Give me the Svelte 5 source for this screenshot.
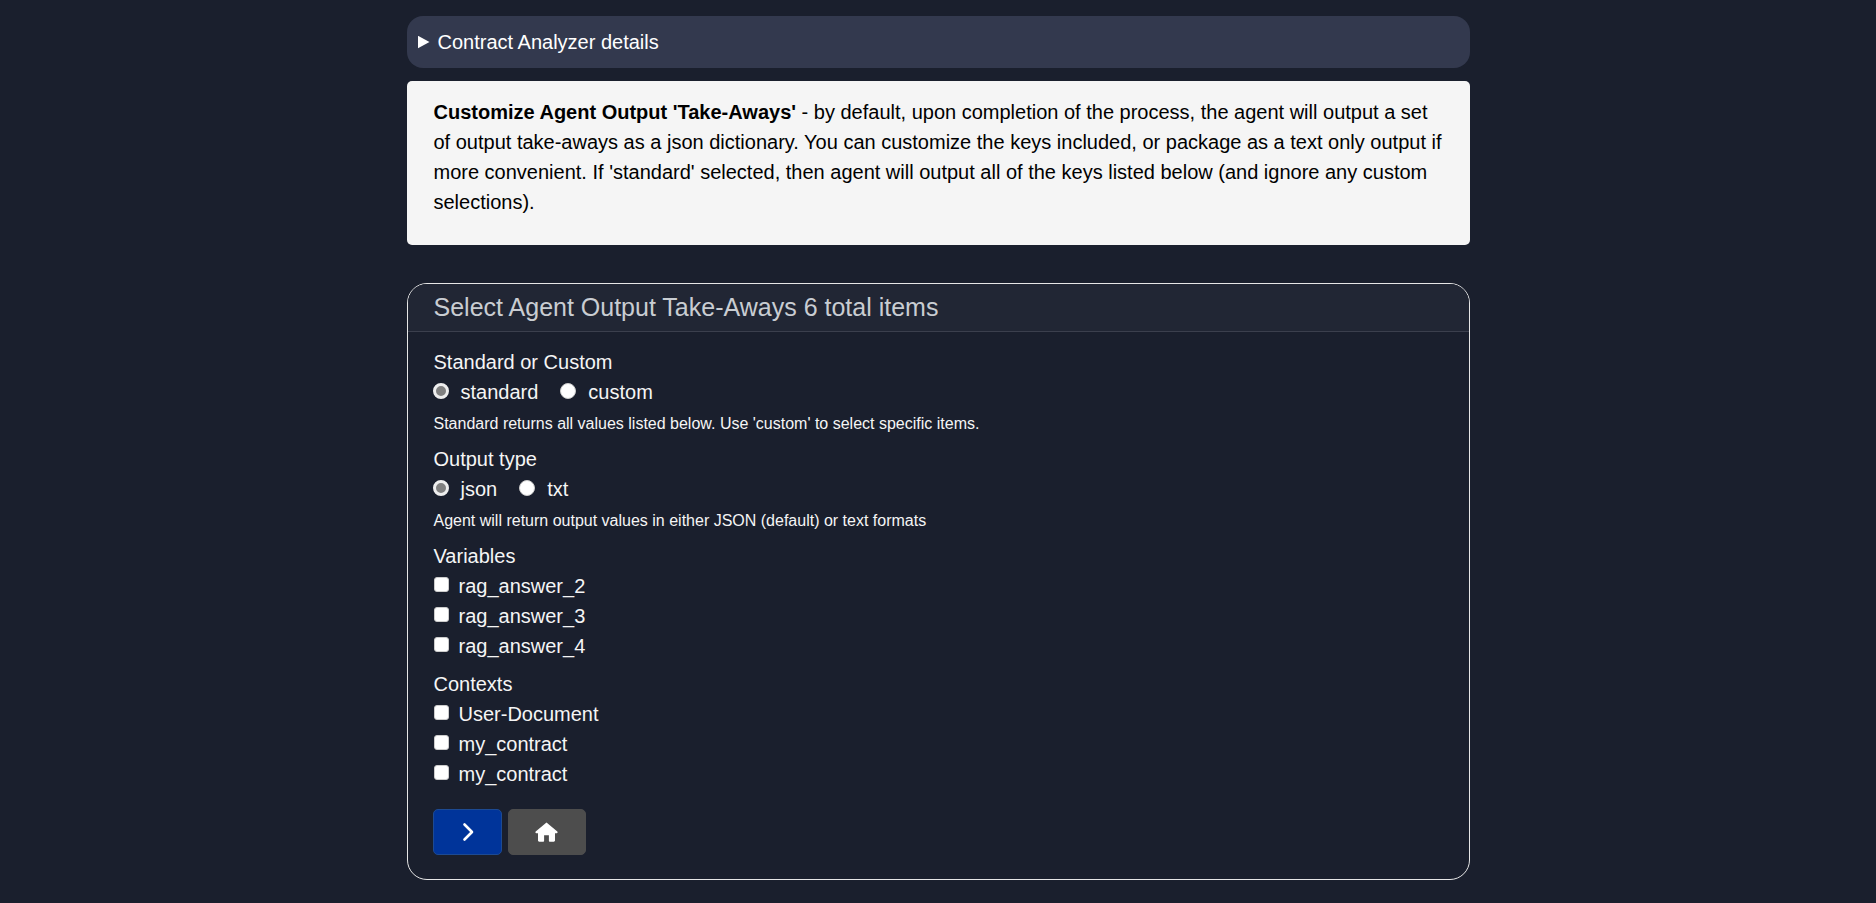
<script>
  const groups = [
    { name: 'mode', label: 'Standard or Custom', options: ['standard', 'custom'], help: "Standard returns all values listed below. Use 'custom' to select specific items." },
    { name: 'format', label: 'Output type', options: ['json', 'txt'], help: 'Agent will return output values in either JSON (default) or text formats' }
  ];
  const checks = [
    { label: 'Variables', items: ['rag_answer_2', 'rag_answer_3', 'rag_answer_4'] },
    { label: 'Contexts', items: ['User-Document', 'my_contract', 'my_contract'] }
  ];
</script>

<main class="page">
  <details class="summary-box">
    <summary>Contract Analyzer details</summary>
  </details>

  <section class="info">
    <p><strong>Customize Agent Output 'Take-Aways'</strong> - by default, upon completion of the process, the agent will output a set of output take-aways as a json dictionary. You can customize the keys included, or package as a text only output if more convenient. If 'standard' selected, then agent will output all of the keys listed below (and ignore any custom selections).</p>
  </section>

  <section class="card">
    <header class="card-header">Select Agent Output Take-Aways 6 total items</header>
    <form class="card-body" onsubmit={(e) => e.preventDefault()}>
      {#each groups as g}
        <div class="group">
          <div class="label">{g.label}</div>
          <div class="radios">
            {#each g.options as o, i}
              <label class="radio"><input type="radio" name={g.name} checked={i === 0} />{o}</label>
            {/each}
          </div>
          <div class="help">{g.help}</div>
        </div>
      {/each}

      {#each checks as c}
        <div class="checks">
          <div class="label">{c.label}</div>
          {#each c.items as item}
            <label class="check"><input type="checkbox" />{item}</label>
          {/each}
        </div>
      {/each}

      <div class="buttons">
        <button class="btn next" type="submit" aria-label="Next">
          <svg width="16" height="20" viewBox="0 0 16 20" fill="none"><path d="M4.500 2.500 12 10l-7.500 7.500" stroke="#fff" stroke-width="2.600" stroke-linecap="round" stroke-linejoin="round" /></svg>
        </button>
        <button class="btn home" type="button" aria-label="Home">
          <svg width="23" height="20" viewBox="0 0 23 20"><path fill="#fff" d="M11.500.4 22.300 9.600c.6.500.3 1.600-.6 1.600H20v7.300c0 .7-.6 1.200-1.200 1.200h-3.900c-.6 0-1-.5-1-1v-5.500H9.100v5.500c0 .5-.4 1-1 1H4.200c-.6 0-1.200-.5-1.200-1.200v-7.300H1.300c-.9 0-1.200-1.100-.6-1.600z" /></svg>
        </button>
      </div>
    </form>
  </section>
</main>

<style>
  :global(body) {
    background: #1a1f2d;
    font-family: "Liberation Sans", Arial, sans-serif;
    font-size: 20px;
    line-height: 1.5;
    color: #f5f5f5;
  }
  .page {
    width: 1063px;
    margin: 0 auto;
    padding: 16px 0 23px;
  }
  .summary-box {
    background: #33394e;
    border-radius: 16px;
    height: 52px;
    margin-bottom: 13px;
  }
  summary {
    display: flex;
    align-items: center;
    height: 52px;
    padding-left: 11px;
    list-style: none;
    cursor: pointer;
    color: #fff;
  }
  summary::before {
    content: "";
    width: 12px;
    height: 13px;
    margin-right: 8px;
    background: #fff;
    clip-path: polygon(0 0, 100% 50%, 0 100%);
  }
  .info {
    background: #f5f5f5;
    color: #000;
    border-radius: 5px;
    padding: 16px 27px 28px;
    margin-bottom: 38px;
  }
  .info p {
    margin: 0;
  }
  .card {
    border: 1px solid #e6e6e6;
    border-radius: 20px;
    overflow: hidden;
  }
  .card-header {
    background: #212634;
    color: #c9cdd2;
    font-size: 25px;
    line-height: 29px;
    padding: 9px 26px;
    border-bottom: 1px solid #3b3f4d;
  }
  .card-body {
    padding: 15px 26px 24px;
    display: flex;
    flex-direction: column;
  }
  .group {
    margin-bottom: 10px;
  }
  .radios {
    display: flex;
    gap: 22px;
  }
  .radio,
  .check {
    display: flex;
    align-items: center;
    height: 30px;
  }
  .radio input,
  .check input {
    appearance: none;
    margin: 0 0 3px;
    background: #fff;
    flex: none;
  }
  .radio input {
    width: 16px;
    height: 16px;
    border-radius: 50%;
    margin-left: -1px;
    margin-right: 12px;
    border: 1px solid #ccc;
  }
  .radio + .radio input {
    margin-left: 0;
  }
  .radio input:checked {
    background: #808080;
    border: 3px solid #eee;
  }
  .check input {
    width: 15px;
    height: 15px;
    margin-right: 10px;
    border-radius: 3px;
    border: 1px solid #ccc;
  }
  .help {
    font-size: 16px;
    line-height: 21px;
    margin-top: 6px;
  }
  .checks {
    margin-bottom: 8px;
  }
  .buttons {
    display: flex;
    gap: 6px;
    margin: 12px 0 0 -1px;
  }
  .btn {
    height: 46px;
    border-radius: 5px;
    display: flex;
    align-items: center;
    justify-content: center;
    padding: 0;
    cursor: pointer;
  }
  .next {
    width: 69px;
    background: #00349a;
    border: 1px solid #1d4a92;
  }
  .next svg {
    margin-left: 2px;
  }
  .home {
    width: 78px;
    background: #4d4d4d;
    border: 1px solid #4d4d4d;
  }
</style>
